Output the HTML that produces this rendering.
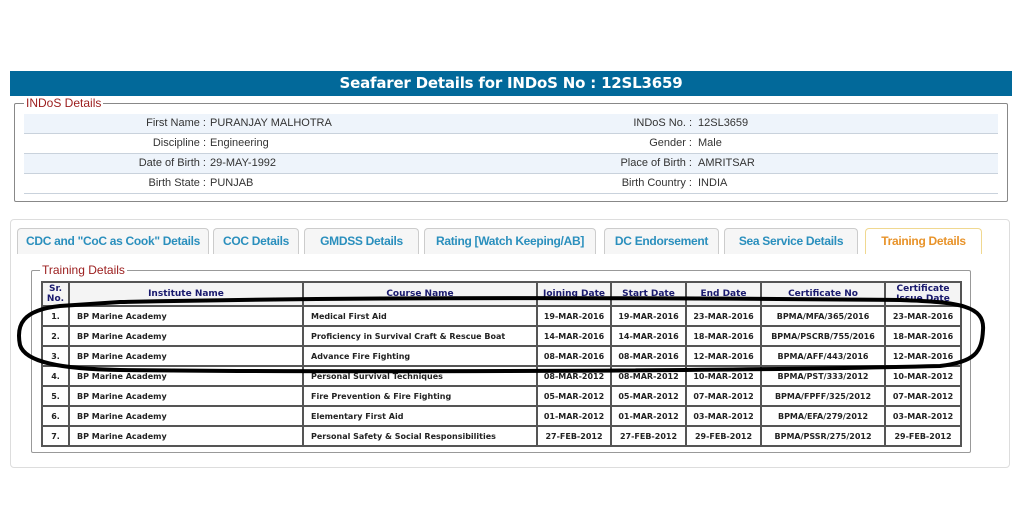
<!DOCTYPE html>
<html><head><style>
*{margin:0;padding:0;box-sizing:border-box}
body{width:1014px;height:520px;background:#fff;position:relative;overflow:hidden;font-family:"Liberation Sans",Arial,sans-serif}
.a{position:absolute}
.bar{left:10px;top:71px;width:1002px;height:25px;background:#02699a;color:#fff;font:bold 15px "DejaVu Sans",sans-serif;text-align:center;line-height:25px;letter-spacing:-0.2px}
.fs{border:1px solid #888;border-radius:2px}
.lg{background:#fff;color:#9b1c1c;font-size:12px;padding:0 2px;line-height:12px}
.row{left:24px;width:974px;height:20px;border-bottom:1px solid #c9d2dc;font-size:11px;color:#333;line-height:19px}
.row.b{background:#eef4fb}
.row span{position:absolute}
.tab{top:228px;height:26px;border:1px solid #ccc;border-bottom:none;border-radius:4px 4px 0 0;background:#f6f6f6;color:#2a8fbd;font-size:12px;font-weight:bold;text-align:center;line-height:25px;letter-spacing:-0.3px}
table{position:absolute;left:41px;top:281px;border-collapse:collapse;font:bold 8px "DejaVu Sans",Verdana,sans-serif;color:#222}
td,th{border:2px solid #555;height:20px;padding:0 7px;white-space:nowrap}
th{color:#1a1a6e;background:#f4f4f4;font-size:9px;height:24px;line-height:10px}
td.c{text-align:center;padding:0 3px}
</style></head><body>
<div class="a bar">Seafarer Details for INDoS No : 12SL3659</div>
<div class="a fs" style="left:14px;top:103px;width:994px;height:99px"></div>
<div class="a lg" style="left:24px;top:97px">INDoS Details</div>
<div class="a row b" style="top:114px"><span style="right:792px">First Name :</span><span style="left:186px">PURANJAY MALHOTRA</span><span style="right:306px">INDoS No. :</span><span style="left:674px">12SL3659</span></div>
<div class="a row" style="top:134px"><span style="right:792px">Discipline :</span><span style="left:186px">Engineering</span><span style="right:306px">Gender :</span><span style="left:674px">Male</span></div>
<div class="a row b" style="top:154px"><span style="right:792px">Date of Birth :</span><span style="left:186px">29-MAY-1992</span><span style="right:306px">Place of Birth :</span><span style="left:674px">AMRITSAR</span></div>
<div class="a row" style="top:174px"><span style="right:792px">Birth State :</span><span style="left:186px">PUNJAB</span><span style="right:306px">Birth Country :</span><span style="left:674px">INDIA</span></div>

<div class="a" style="left:10px;top:219px;width:1000px;height:249px;border:1px solid #ddd;border-radius:4px"></div>
<div class="a tab" style="left:17px;width:192px">CDC and "CoC as Cook" Details</div>
<div class="a tab" style="left:213px;width:86px">COC Details</div>
<div class="a tab" style="left:304px;width:115px">GMDSS Details</div>
<div class="a tab" style="left:424px;width:172px">Rating [Watch Keeping/AB]</div>
<div class="a tab" style="left:604px;width:115px">DC Endorsement</div>
<div class="a tab" style="left:724px;width:134px">Sea Service Details</div>
<div class="a tab" style="left:865px;width:117px;background:#fff;border-color:#f0d890;color:#e8932a">Training Details</div>

<div class="a fs" style="left:31px;top:270px;width:940px;height:183px;border-color:#999"></div>
<div class="a lg" style="left:40px;top:264px">Training Details</div>
<table>
<tr><th style="width:27px;padding:0">Sr.<br>No.</th><th style="width:234px">Institute Name</th><th style="width:234px">Course Name</th><th style="width:74px;padding:0">Joining Date</th><th style="width:75px">Start Date</th><th style="width:75px">End Date</th><th style="width:124px">Certificate No</th><th style="width:76px;padding:0">Certificate<br>Issue Date</th></tr>
<tr><td class="c">1.</td><td>BP Marine Academy</td><td>Medical First Aid</td><td class="c">19-MAR-2016</td><td class="c">19-MAR-2016</td><td class="c">23-MAR-2016</td><td class="c">BPMA/MFA/365/2016</td><td class="c">23-MAR-2016</td></tr>
<tr><td class="c">2.</td><td>BP Marine Academy</td><td>Proficiency in Survival Craft &amp; Rescue Boat</td><td class="c">14-MAR-2016</td><td class="c">14-MAR-2016</td><td class="c">18-MAR-2016</td><td class="c">BPMA/PSCRB/755/2016</td><td class="c">18-MAR-2016</td></tr>
<tr><td class="c">3.</td><td>BP Marine Academy</td><td>Advance Fire Fighting</td><td class="c">08-MAR-2016</td><td class="c">08-MAR-2016</td><td class="c">12-MAR-2016</td><td class="c">BPMA/AFF/443/2016</td><td class="c">12-MAR-2016</td></tr>
<tr><td class="c">4.</td><td>BP Marine Academy</td><td>Personal Survival Techniques</td><td class="c">08-MAR-2012</td><td class="c">08-MAR-2012</td><td class="c">10-MAR-2012</td><td class="c">BPMA/PST/333/2012</td><td class="c">10-MAR-2012</td></tr>
<tr><td class="c">5.</td><td>BP Marine Academy</td><td>Fire Prevention &amp; Fire Fighting</td><td class="c">05-MAR-2012</td><td class="c">05-MAR-2012</td><td class="c">07-MAR-2012</td><td class="c">BPMA/FPFF/325/2012</td><td class="c">07-MAR-2012</td></tr>
<tr><td class="c">6.</td><td>BP Marine Academy</td><td>Elementary First Aid</td><td class="c">01-MAR-2012</td><td class="c">01-MAR-2012</td><td class="c">03-MAR-2012</td><td class="c">BPMA/EFA/279/2012</td><td class="c">03-MAR-2012</td></tr>
<tr><td class="c">7.</td><td>BP Marine Academy</td><td>Personal Safety &amp; Social Responsibilities</td><td class="c">27-FEB-2012</td><td class="c">27-FEB-2012</td><td class="c">29-FEB-2012</td><td class="c">BPMA/PSSR/275/2012</td><td class="c">29-FEB-2012</td></tr>
</table>
<svg class="a" style="left:0;top:0" width="1014" height="520"><path d="M120 302 C400 296 700 298 900 300 C960 302 985 306 983 330 C982 352 975 362 940 366 C700 372 300 372 120 370 C60 369 25 362 20 345 C16 325 22 310 60 306 Z" fill="none" stroke="#000" stroke-width="4"/></svg>
</body></html>
